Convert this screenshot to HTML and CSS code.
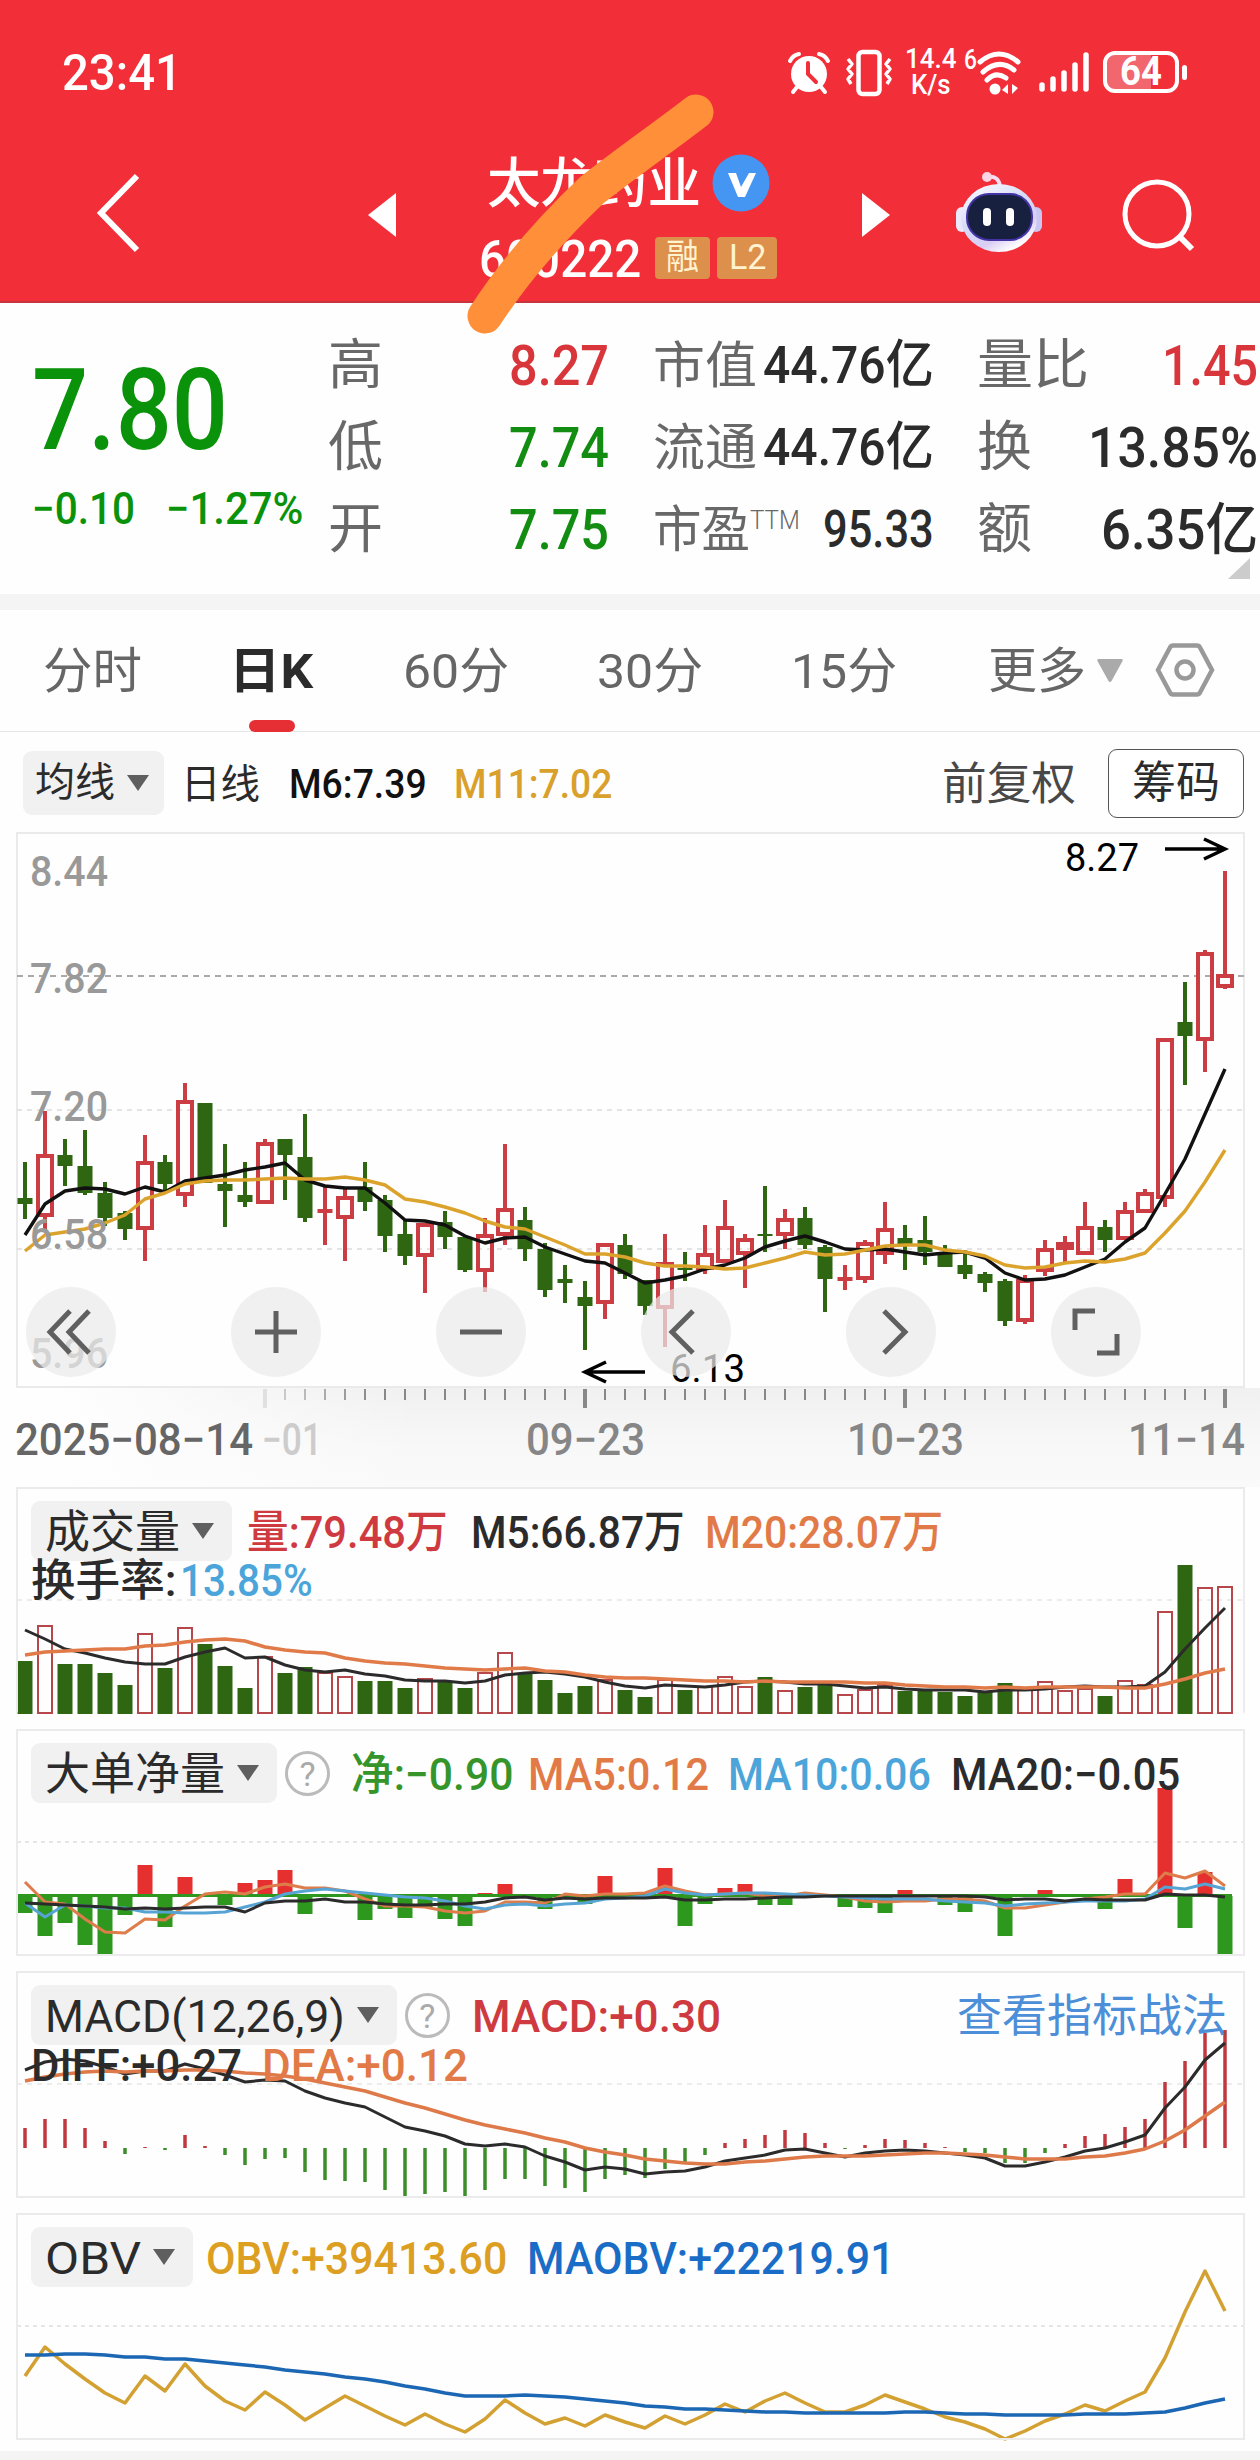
FILE: index.html
```html
<!DOCTYPE html>
<html lang="zh-CN">
<head>
  <meta charset="UTF-8">
  <title>太龙药业 600222</title>
  <link rel="stylesheet" href="styles.css">
</head>
<body>
  <header class="header">
    <div class="status">
      <span class="time fit" data-w="120">23:41</span>
      <svg class="ic-alarm" width="42" height="42" viewBox="0 0 42 42">
        <circle cx="21" cy="23" r="18" fill="#fff"/>
        <path d="M2 10 Q5 4 11 3 M40 10 Q37 4 31 3 M9 36 L5 41 M33 36 L37 41" stroke="#fff" stroke-width="4" fill="none" stroke-linecap="round"/>
        <path d="M20 12 V23 L28 31" stroke="#f22e38" stroke-width="4" fill="none" stroke-linecap="round"/>
      </svg>
      <svg class="ic-vibrate" width="48" height="42" viewBox="0 0 48 42">
        <rect x="13.500" y="1" width="21" height="42" rx="4" fill="none" stroke="#fff" stroke-width="4.500"/>
        <path d="M3 8 L7 13 L3 18 L7 23 L3 28 L6 33 M45 8 L41 13 L45 18 L41 23 L45 28 L42 33" stroke="#fff" stroke-width="3.500" fill="none" stroke-linejoin="round"/>
      </svg>
      <div class="speed"><span class="fit" data-w="52">14.4</span><span class="fit" data-w="40">K/s</span></div>
      <span class="six fit" data-w="13">6</span>
      <svg class="ic-wifi" width="44" height="46" viewBox="0 0 44 46">
        <path d="M3 12 Q22 -4 41 12 M6 22 Q22 8 37 20 M10 30 Q19 21 29 28" stroke="#fff" stroke-width="5" fill="none" stroke-linecap="round"/>
        <circle cx="18" cy="39" r="5.500" fill="#fff"/>
        <path d="M31 34 V44 L25 40 Z M35 34 V44 L41 38 Z" fill="#fff"/>
      </svg>
      <svg class="ic-signal" width="50" height="42" viewBox="0 0 50 42">
        <path d="M3 34 V38 M14 28 V38 M25 22 V38 M36 14 V38 M47 4 V38" stroke="#fff" stroke-width="5.500" stroke-linecap="round"/>
      </svg>
      <div class="battery"><span class="fit" data-w="42">64</span></div>
      <i class="battery-tip"></i>
    </div>
    <div class="nav">
      <svg class="ic-back" width="46" height="80" viewBox="0 0 46 80"><path d="M41 3 L5 40 L41 77" stroke="#fff" stroke-width="6" fill="none"/></svg>
      <svg class="ic-prev" width="28" height="44" viewBox="0 0 28 44"><path d="M28 0 V44 L0 22 Z" fill="#fff"/></svg>
      <div class="title">
        <div class="title-row">
          <span class="name fit" data-w="214">太龙药业</span>
          <svg width="58" height="58" viewBox="0 0 58 58">
            <circle cx="29" cy="29" r="28.500" fill="#4595f2"/>
            <path d="M16 19 H24 L29 33 L37 19 H44 L33 43 H26 Z" fill="#fff"/>
          </svg>
        </div>
        <div class="title-row">
          <span class="code fit" data-w="162">600222</span>
          <span class="tag tag-first"><b class="fit" data-w="33">融</b></span>
          <span class="tag"><b class="fit" data-w="38">L2</b></span>
        </div>
      </div>
      <svg class="ic-next" width="28" height="44" viewBox="0 0 28 44"><path d="M0 0 V44 L28 22 Z" fill="#fff"/></svg>
      <svg class="ic-robot" width="88" height="82" viewBox="0 0 88 82">
        <defs>
          <linearGradient id="shell" x1="0" y1="0" x2="0.600" y2="1">
            <stop offset="0" stop-color="#fff"/><stop offset=".5" stop-color="#d5dcf8"/><stop offset=".8" stop-color="#d9cdf3"/><stop offset="1" stop-color="#fff"/>
          </linearGradient>
        </defs>
        <path d="M32 6 Q44 4 45 16" stroke="#f6dcf3" stroke-width="4" fill="none"/>
        <circle cx="32" cy="6" r="5" fill="#fbd5e3"/>
        <rect x="1" y="36" width="12" height="25" rx="6" fill="#ece8fb"/>
        <rect x="75" y="36" width="12" height="25" rx="6" fill="#c9c6f4"/>
        <ellipse cx="44" cy="47" rx="38" ry="34" fill="url(#shell)"/>
        <rect x="12" y="23" width="65" height="46" rx="22" fill="#17203f" stroke="#4433a5" stroke-width="2"/>
        <rect x="28" y="37" width="8" height="18" rx="4" fill="#fff"/>
        <rect x="51" y="37" width="8" height="18" rx="4" fill="#fff"/>
      </svg>
      <svg class="ic-search" width="74" height="74" viewBox="0 0 74 74">
        <circle cx="35" cy="35" r="32" fill="none" stroke="#fff" stroke-width="5"/>
        <path d="M57 57 L70 70" stroke="#fff" stroke-width="6"/>
      </svg>
    </div>
    <svg class="brush" width="270" height="250" viewBox="460 90 270 250">
      <path d="M485 316 C515 270 550 230 592 190 C622 166 665 136 696 112" stroke="#ff8f39" stroke-width="35" fill="none" stroke-linecap="round"/>
    </svg>
  </header>

  <section class="quote">
    <div class="price">
      <div class="last fit" data-w="196">7.80</div>
      <div class="change"><span class="fit" data-w="103">−0.10</span><span class="fit" data-w="137">−1.27%</span></div>
    </div>
    <div class="col col-a">
      <div><label class="fit" data-w="55">高</label><span class="up fit" data-w="100">8.27</span></div>
      <div><label class="fit" data-w="55">低</label><span class="down fit" data-w="100">7.74</span></div>
      <div><label class="fit" data-w="55">开</label><span class="down fit" data-w="100">7.75</span></div>
    </div>
    <div class="col col-b">
      <div><label class="fit" data-w="104">市值</label><span class="fit" data-w="171">44.76亿</span></div>
      <div><label class="fit" data-w="104">流通</label><span class="fit" data-w="171">44.76亿</span></div>
      <div><label class="pe"><span class="fit" data-w="97">市盈</span><sup class="fit" data-w="50">TTM</sup></label><span class="fit" data-w="111">95.33</span></div>
    </div>
    <div class="col col-c">
      <div><label class="fit" data-w="112">量比</label><span class="up fit" data-w="96">1.45</span></div>
      <div><label class="fit" data-w="55">换</label><span class="fit" data-w="170">13.85%</span></div>
      <div><label class="fit" data-w="55">额</label><span class="fit" data-w="157">6.35亿</span></div>
    </div>
    <i class="corner"></i>
  </section>

  <nav class="tabs">
    <a><span class="fit" data-w="99">分时</span></a>
    <a class="active"><span class="fit" data-w="84">日K</span></a>
    <a><span class="fit" data-w="106">60分</span></a>
    <a><span class="fit" data-w="106">30分</span></a>
    <a><span class="fit" data-w="106">15分</span></a>
    <a><span class="fit" data-w="98">更多</span></a>
    <svg class="more" width="28" height="24" viewBox="0 0 28 24"><path d="M3 0 H25 Q28 0 26 3 L15.500 22 Q14 24 12.500 22 L2 3 Q0 0 3 0" fill="#aaa"/></svg>
    <svg class="hex" width="60" height="56" viewBox="0 0 60 56">
      <path d="M18 3.500 H42 Q44 3.500 45 5.500 L57 28 L45 50.500 Q44 52.500 42 52.500 H18 Q16 52.500 15 50.500 L3 28 L15 5.500 Q16 3.500 18 3.500 Z" fill="none" stroke="#999" stroke-width="4.500"/>
      <circle cx="30" cy="28" r="8.500" fill="none" stroke="#999" stroke-width="4.500"/>
    </svg>
  </nav>

  <div class="ma-row">
    <button class="pick"><span class="fit" data-w="80">均线</span><i></i></button>
    <span class="period fit" data-w="79">日线</span>
    <span class="m6 fit" data-w="138">M6:7.39</span>
    <span class="m11 fit" data-w="158">M11:7.02</span>
    <span class="adjust fit" data-w="134">前复权</span>
    <button class="chips"><span class="fit" data-w="88">筹码</span></button>
  </div>

  <div class="chart">
    <svg id="kline" width="1229" height="556" viewBox="16 832 1229 556"></svg>
    <div class="controls">
      <button><svg viewBox="0 0 90 90"><path d="M44 24 L24 45 L44 66 M63 24 L43 45 L63 66"/></svg></button>
      <button><svg viewBox="0 0 90 90"><path d="M24 45 H66 M45 24 V66"/></svg></button>
      <button><svg viewBox="0 0 90 90"><path d="M24 45 H66"/></svg></button>
      <button><svg viewBox="0 0 90 90"><path d="M52 24 L31 45 L52 66"/></svg></button>
      <button><svg viewBox="0 0 90 90"><path d="M38 24 L59 45 L38 66"/></svg></button>
      <button><svg viewBox="0 0 90 90"><path d="M24 43 V24 H44 M66 47 V66 H46"/></svg></button>
    </div>
  </div>
  <div class="axis"><svg id="axis" width="1260" height="99" viewBox="0 1388 1260 99"></svg></div>

  <section class="panel panel-vol">
    <svg id="vol" width="1229" height="227" viewBox="16 1487 1229 227"></svg>
    <div class="legend">
      <button class="pick"><span class="fit" data-w="135">成交量</span><i></i></button>
      <span class="red l-vol fit" data-w="201">量:79.48万</span>
      <span class="black l-m5 fit" data-w="214">M5:66.87万</span>
      <span class="orange l-m20 fit" data-w="238">M20:28.07万</span>
    </div>
    <div class="legend2"><span class="black fit" data-w="146">换手率:</span><span class="sky fit" data-w="133">13.85%</span></div>
  </section>

  <section class="panel">
    <svg id="net" width="1229" height="227" viewBox="16 1729 1229 227"></svg>
    <div class="legend">
      <button class="pick"><span class="fit" data-w="180">大单净量</span><i></i></button>
      <span class="help">?</span>
      <span class="green l-net fit" data-w="162">净:−0.90</span>
      <span class="orange l-ma5 fit" data-w="181">MA5:0.12</span>
      <span class="sky l-ma10 fit" data-w="203">MA10:0.06</span>
      <span class="black l-ma20 fit" data-w="229">MA20:−0.05</span>
    </div>
  </section>

  <section class="panel">
    <svg id="macd" width="1229" height="227" viewBox="16 1971 1229 227"></svg>
    <div class="legend">
      <button class="pick"><span class="fit" data-w="300">MACD(12,26,9)</span><i></i></button>
      <span class="help">?</span>
      <span class="red l-macd fit" data-w="249">MACD:+0.30</span>
      <a class="link fit" data-w="270">查看指标战法</a>
    </div>
    <div class="legend2 gap"><span class="black fit" data-w="211">DIFF:+0.27</span><span class="orange fit" data-w="206">DEA:+0.12</span></div>
  </section>

  <section class="panel">
    <svg id="obv" width="1229" height="227" viewBox="16 2213 1229 227"></svg>
    <div class="legend">
      <button class="pick"><span class="fit" data-w="96">OBV</span><i></i></button>
      <span class="gold l-obv fit" data-w="301">OBV:+39413.60</span>
      <span class="blue l-maobv fit" data-w="368">MAOBV:+22219.91</span>
    </div>
  </section>
  <footer class="foot"></footer>

  <script src="chart.js"></script>
</body>
</html>
```

FILE: styles.css
```css
* { box-sizing: border-box; }

body {
  margin: 0;
  width: 1260px;
  height: 2460px;
  overflow: hidden;
  background: #fefefe;
  color: #2b2b2b;
  font-family: Roboto, "Noto Sans CJK SC", sans-serif;
  display: flex;
  flex-direction: column;
}

button { border: 0; padding: 0; font: inherit; color: inherit; }
svg { display: block; flex: none; overflow: visible; }
.fit { display: inline-block; white-space: nowrap; flex: none; transform-origin: 0 50%; }

/* header */
.header {
  position: relative;
  flex: none;
  height: 303px;
  background: #f22e38;
  border-bottom: 2px solid #c6353c;
  color: #fff;
}
.status { display: flex; align-items: center; height: 144px; padding-left: 62px; }
.time { font-size: 50px; font-weight: 500; line-height: 144px; padding-top: 2px; }
.ic-alarm { margin-left: 606px; }
.ic-vibrate { margin-left: 15px; }
.speed { width: 54px; margin-left: 12px; display: flex; flex-direction: column; align-items: flex-start; font-size: 27px; line-height: 26px; font-weight: 500; }
.speed .fit + .fit { margin-left: 6px; }
.six { font-size: 28px; line-height: 26px; margin-left: 5px; padding-bottom: 0; margin-top: -25px; font-weight: 500; }
.ic-wifi { margin-left: 0; margin-top: 2px; }
.ic-signal { margin-left: 18px; }
.battery {
  width: 76px; height: 42px; margin-left: 14px;
  border: 4px solid #fff; border-radius: 12px;
  background: linear-gradient(90deg, #f2666d 64%, #f22e38 64%);
  display: flex; justify-content: center; align-items: center;
  font-size: 40px; font-weight: 700; line-height: 36px;
}
.battery-tip { width: 5px; height: 15px; margin-left: 3px; border-radius: 3px; background: #fff; }

.nav { display: flex; align-items: flex-start; padding-left: 96px; }
.ic-back { margin-top: 29px; }
.ic-prev { margin: 49px 0 0 226px; }
.title { width: 306px; margin-left: 83px; padding-top: 4px; }
.title-row { display: flex; align-items: center; height: 70px; padding-left: 8px; }
.title-row + .title-row { height: 76px; margin-top: 2px; padding: 0; }
.name { font-size: 54px; line-height: 70px; font-weight: 500; padding-top: 4px; }
.title-row svg { margin-left: 11px; }
.code { font-size: 52px; line-height: 76px; font-weight: 500; padding-top: 3px; }
.tag { width: 60px; height: 42px; margin-left: 7px; background: #dd8f4c; border-radius: 4px; display: flex; justify-content: center; align-items: center; color: #fff3d0; }
.tag b { font-size: 35px; font-weight: 400; line-height: 42px; }
.tag-first { width: 55px; margin-left: 14px; }
.ic-next { margin: 49px 0 0 77px; }
.ic-robot { margin: 27px 0 0 65px; }
.ic-search { margin: 35px 0 0 79px; }
.brush { position: absolute; left: 460px; top: 90px; z-index: 2; }

/* quote */
.quote { position: relative; display: flex; height: 291px; flex: none; padding-top: 22px; }
.price { width: 328px; padding: 30px 0 0 32px; color: #0a930a; }
.last { font-size: 113px; font-weight: 500; line-height: 112px; display: inline-block; }
.change { display: flex; gap: 31px; font-size: 44px; line-height: 60px; font-weight: 500; margin-top: 12px; }
.col > div { display: flex; justify-content: space-between; align-items: center; height: 82px; }
.col label { color: #686868; font-size: 54px; font-weight: 400; line-height: 82px; }
.col span { font-weight: 500; line-height: 82px; }
.col-a { width: 281px; font-size: 56px; }
.col-b { width: 281px; margin-left: 44px; font-size: 52px; }
.col-b label { font-size: 50px; }
.col .pe { display: flex; }
.pe .fit { font-weight: 400; }
.col .pe sup { font-size: 26px; line-height: 62px; height: 82px; font-weight: 300; vertical-align: top; }
.col-c { width: 281px; margin-left: 43px; font-size: 56px; }
.up { color: #d8363b; }
.down { color: #128d12; }
.corner { position: absolute; right: 10px; bottom: 15px; border-style: solid; border-width: 0 0 21px 22px; border-color: transparent transparent #ccc transparent; }

/* tabs */
.tabs {
  flex: none; height: 138px; border-top: 16px solid #f4f4f4; border-bottom: 1.500px solid #e6e6e6;
  display: grid; grid-template-columns: 184px 182px 180px 208px 184px 158px 60px 64px; color: #666; font-size: 49px;
}
.tabs a { display: flex; flex-direction: column; align-items: center; line-height: 124px; height: 121px; }
.tabs .active { color: #2b2b2b; font-weight: 700; padding-right: 7px; }
.tabs .active::after { content: ""; width: 46px; height: 12px; border-radius: 6px; background: #e52f35; margin: -14px 0 0 0; flex: none; }
.tabs a:nth-child(1) { padding-left: 2px; }
.tabs a:nth-child(5) { padding-right: 4px; }
.tabs a:nth-child(6) { padding-left: 40px; }
.more { margin: 49px 0 0 0; }
.hex { margin: 32px 0 0 -1px; }

/* moving averages */
.ma-row { display: flex; align-items: center; flex: none; height: 100px; padding: 2px 16px 0 23px; line-height: 66px; }
.pick { display: flex; align-items: center; background: #f1f1f1; border-radius: 9px; }
.pick i { border-style: solid; border-width: 16px 11px 0; border-color: #5f5f5f transparent transparent; margin-left: 12px; }
.ma-row .pick { width: 141px; height: 64px; padding-left: 12px; font-size: 40px; }
.ma-row > .fit { padding-top: 4px; }
.period { font-size: 40px; margin-left: 17px; }
.m6, .m11 { font-size: 40px; font-weight: 500; color: #111; margin-left: 27px; }
.m11 { color: #d9a02b; }
.m6 { margin-left: 29px; }
.adjust { font-size: 45px; color: #484848; margin-left: 330px; }
.chips { width: 136px; height: 69px; margin-left: auto; border: 1.500px solid #555; border-radius: 9px; background: #fff; font-size: 44px; line-height: 66px; }

/* candles */
.chart { position: relative; flex: none; height: 556px; margin: 0 15px 0 16px; box-shadow: inset 0 0 0 2px #eaeaea; }
.controls { position: absolute; left: 10px; bottom: 11px; display: flex; gap: 115px; }
.controls button { width: 90px; height: 90px; border-radius: 50%; background: rgba(234, 234, 234, .72); }
.controls path { fill: none; stroke: #606060; stroke-width: 5; }
.axis { flex: none; height: 99px; background: linear-gradient(90deg, #fefefe 60px, rgba(254, 254, 254, 0) 420px), linear-gradient(#f0f0f0, #f8f8f8 60%, #fafafa); }

/* indicator panels */
.panel { position: relative; flex: none; height: 227px; margin: 0 15px 15px 16px; border: 2px solid #ebebeb; padding: 12px 0 0 13px; }
.panel-vol { border-bottom-color: transparent; }
.panel > svg { position: absolute; left: -2px; top: -2px; z-index: -1; }
.legend { display: flex; align-items: center; height: 60px; font-size: 45px; line-height: 60px; position: relative; }
.legend .fit { padding-top: 4px; }
.legend .pick { height: 60px; padding: 0 18px 0 14px; }
.legend > .fit, .legend2 .fit { font-weight: 500; }
.legend > .link { font-weight: 400; }
.legend2 { display: flex; gap: 3px; font-size: 44px; line-height: 48px; margin-top: -4px; position: relative; }
.legend2.gap { gap: 20px; margin-top: -3px; }
.legend .pick .fit { padding-top: 3px; }
.help { width: 45px; height: 45px; border: 3px solid #bbb; border-radius: 50%; color: #aaa; font-size: 34px; line-height: 40px; text-align: center; margin-left: 8px; flex: none; }
.l-vol { margin-left: 15px; }
.l-m5 { margin-left: 23px; }
.l-m20 { margin-left: 21px; }
.l-net { margin-left: 21px; }
.l-ma5 { margin-left: 15px; }
.l-ma10 { margin-left: 18px; }
.l-ma20 { margin-left: 20px; }
.l-macd { margin-left: 22px; }
.link { margin-left: 236px; color: #4c8fd8; }
.l-obv { margin-left: 13px; }
.l-maobv { margin-left: 20px; }
.red { color: #cf3a40; }
.black { color: #2b2b2b; }
.orange { color: #e27a48; }
.sky { color: #4ba5da; }
.green { color: #35952a; }
.gold { color: #dc9f22; }
.blue { color: #1a6dc6; }
.foot { height: 9px; flex: none; background: #f4f4f4; margin-top: -4px; }
```

FILE: chart.js
```js
const STEP = 20;
const X0 = 25;
const RED = "#cb3d42";
const GREEN = "#2f6612";

const px = (i) => X0 + i * STEP;

// [rising, high, body top, body bottom, low]
const candles = [
  [0,1162,1198,1204,1219],[1,1111,1154,1217,1232],[0,1139,1155,1166,1186],[0,1130,1166,1193,1195],
  [0,1182,1193,1218,1226],[0,1211,1213,1229,1240],[1,1135,1161,1230,1261],[0,1155,1162,1184,1192],
  [1,1083,1100,1196,1207],[0,1103,1103,1183,1183],[0,1144,1184,1191,1227],[0,1162,1195,1202,1207],
  [1,1139,1142,1204,1204],[0,1139,1139,1155,1200],[0,1114,1157,1218,1222],[1,1185,1209,1213,1245],
  [1,1187,1196,1219,1261],[0,1162,1187,1202,1211],[0,1195,1200,1236,1252],[0,1219,1234,1256,1265],
  [1,1223,1223,1257,1293],[0,1211,1222,1237,1249],[0,1237,1237,1270,1272],[1,1218,1234,1272,1292],
  [1,1144,1208,1236,1245],[0,1207,1220,1249,1261],[0,1243,1249,1290,1297],[0,1265,1279,1283,1303],
  [0,1281,1297,1306,1350],[1,1243,1243,1304,1319],[0,1234,1245,1274,1279],[0,1280,1280,1306,1315],
  [1,1234,1262,1309,1347],[0,1252,1268,1270,1281],[1,1225,1253,1270,1274],[1,1200,1226,1263,1263],
  [1,1234,1238,1255,1288],[0,1186,1234,1236,1252],[1,1209,1218,1236,1249],[0,1207,1218,1245,1249],
  [0,1245,1247,1279,1312],[1,1265,1277,1281,1290],[1,1240,1242,1280,1283],[1,1202,1228,1255,1264],
  [0,1225,1238,1244,1270],[0,1216,1240,1252,1265],[0,1245,1252,1267,1267],[0,1254,1265,1274,1279],
  [0,1272,1274,1283,1292],[0,1279,1281,1321,1326],[1,1275,1279,1322,1324],[1,1240,1248,1272,1276],
  [1,1236,1242,1250,1264],[1,1202,1226,1255,1255],[0,1220,1227,1240,1252],[1,1202,1210,1240,1240],
  [1,1189,1192,1213,1213],[1,1038,1038,1199,1207],[0,982,1022,1036,1085],[1,950,952,1041,1072],
  [1,871,974,988,989]
];
const ma6 = [1235,1204,1191,1188,1189,1194,1187,1192,1181,1178,1175,1170,1167,1163,1180,1186,1188,1188,1203,1220,1221,1225,1236,1243,1238,1237,1247,1254,1261,1263,1273,1283,1280,1276,1269,1265,1258,1247,1241,1236,1242,1249,1250,1249,1252,1255,1253,1252,1258,1273,1280,1279,1275,1267,1259,1242,1228,1194,1159,1114,1069];
const ma11 = [1251,1235,1232,1229,1223,1215,1199,1193,1184,1181,1180,1180,1179,1178,1179,1179,1177,1180,1185,1199,1202,1207,1213,1221,1227,1229,1237,1245,1254,1254,1257,1263,1266,1266,1267,1269,1268,1263,1258,1252,1255,1254,1250,1246,1245,1245,1250,1252,1256,1265,1268,1267,1263,1261,1262,1259,1253,1233,1211,1182,1150];

const volume = [1661,1626,1664,1664,1673,1685,1634,1668,1628,1644,1666,1688,1657,1673,1667,1673,1677,1681,1681,1688,1679,1681,1688,1673,1653,1674,1680,1693,1686,1680,1690,1697,1680,1690,1687,1677,1687,1677,1691,1687,1684,1695,1690,1685,1691,1690,1692,1696,1691,1683,1689,1682,1691,1689,1696,1681,1685,1612,1565,1588,1587];
const volM5 = [1630,1639,1649,1653,1658,1662,1664,1664,1657,1652,1648,1658,1657,1665,1670,1672,1670,1674,1676,1680,1681,1681,1683,1681,1675,1673,1672,1674,1677,1682,1686,1688,1685,1686,1687,1685,1682,1681,1682,1684,1684,1686,1688,1687,1689,1690,1690,1690,1692,1690,1690,1689,1687,1686,1687,1687,1686,1672,1649,1628,1608];
const volM20 = [1655,1652,1651,1650,1649,1649,1646,1645,1642,1640,1639,1641,1647,1650,1652,1653,1658,1661,1663,1664,1666,1668,1669,1670,1669,1668,1671,1672,1675,1677,1678,1678,1679,1680,1681,1681,1682,1681,1682,1682,1682,1682,1683,1683,1685,1686,1687,1687,1688,1687,1688,1687,1687,1687,1687,1688,1688,1684,1679,1673,1669];

const net = [1913,1936,1923,1945,1955,1915,1865,1927,1877,0,1905,1883,1880,1870,1914,0,0,1920,1909,1918,1908,1919,1926,1893,1884,0,1909,0,1904,1876,0,0,1868,1926,1904,1888,1884,1905,1905,0,0,1907,1908,1913,1890,0,1905,1912,0,1936,0,1890,0,0,1909,1879,0,1788,1928,1872,1955];
const netMa5 = [1882,1902,1904,1919,1932,1933,1919,1920,1906,1894,1892,1894,1887,1884,1888,1888,1891,1899,1906,1906,1907,1911,1913,1911,1902,1902,1903,1894,1896,1894,1894,1893,1886,1891,1895,1894,1893,1896,1896,1893,1895,1897,1901,1902,1901,1901,1899,1899,1901,1908,1908,1905,1902,1899,1897,1894,1894,1873,1878,1871,1886];
const netMa10 = [1903,1917,1905,1906,1908,1908,1912,1912,1913,1913,1912,1907,1902,1894,1891,1889,1891,1893,1895,1897,1898,1901,1906,1909,1905,1904,1906,1904,1903,1899,1898,1896,1889,1893,1895,1894,1893,1893,1894,1895,1896,1897,1898,1899,1899,1899,1901,1902,1903,1906,1904,1903,1902,1901,1901,1901,1899,1887,1889,1884,1889];
const netMa20 = [1903,1904,1905,1906,1907,1909,1908,1909,1908,1907,1907,1912,1903,1901,1901,1899,1902,1902,1904,1905,1905,1904,1904,1902,1898,1897,1900,1898,1899,1898,1898,1898,1897,1900,1900,1899,1899,1898,1897,1897,1896,1896,1896,1896,1896,1896,1896,1896,1897,1900,1899,1899,1901,1899,1900,1900,1900,1894,1895,1895,1897];

const macd = [2128,2119,2119,2128,2141,2154,2147,2150,2135,2146,2155,2165,2159,2158,2172,2180,2181,2182,2190,2197,2194,2192,2197,2190,2179,2179,2186,2188,2192,2179,2175,2178,2169,2162,2155,2143,2139,2135,2130,2133,2143,2149,2145,2139,2140,2143,2147,2152,2153,2163,2163,2153,2144,2136,2134,2127,2119,2082,2061,2033,2030];
const diff = [2070,2062,2059,2061,2067,2074,2071,2071,2064,2069,2075,2082,2080,2081,2091,2098,2103,2107,2117,2127,2131,2136,2144,2146,2144,2147,2156,2162,2170,2167,2169,2174,2172,2171,2167,2161,2158,2155,2150,2149,2153,2157,2153,2151,2150,2151,2153,2155,2158,2166,2166,2162,2157,2151,2148,2142,2135,2108,2087,2060,2043];
const dea = [2081,2077,2074,2072,2071,2072,2071,2071,2070,2070,2071,2073,2074,2076,2079,2083,2087,2091,2097,2103,2108,2114,2120,2125,2129,2133,2138,2142,2148,2152,2155,2159,2161,2163,2164,2164,2162,2161,2159,2157,2156,2156,2156,2155,2154,2153,2153,2154,2155,2157,2159,2159,2159,2157,2156,2153,2149,2141,2130,2116,2102];

const obv = [2376,2347,2364,2379,2393,2403,2376,2391,2364,2386,2401,2410,2392,2405,2420,2408,2396,2406,2416,2425,2414,2424,2432,2419,2400,2413,2424,2418,2426,2415,2422,2428,2416,2424,2415,2404,2412,2401,2393,2403,2412,2412,2405,2395,2402,2409,2417,2422,2429,2439,2431,2421,2414,2405,2411,2401,2392,2358,2312,2271,2311];
const maobv = [2355,2355,2354,2354,2355,2357,2357,2359,2359,2361,2363,2365,2367,2370,2372,2374,2377,2379,2382,2386,2389,2393,2396,2396,2396,2395,2396,2397,2399,2401,2403,2406,2407,2409,2409,2410,2411,2412,2412,2413,2413,2413,2413,2413,2412,2412,2413,2414,2414,2415,2415,2415,2415,2414,2414,2414,2413,2412,2408,2403,2399];

const line = (ys, color, w = 3) =>
  `<polyline points="${ys.map((y, i) => px(i) + "," + y).join(" ")}" fill="none" stroke="${color}" stroke-width="${w}" stroke-linejoin="round"/>`;
const grid = (y, color = "#dcdcdc", dash = "5 5", w = 1.5) =>
  `<path d="M17 ${y} H1244" stroke="${color}" stroke-width="${w}" stroke-dasharray="${dash}"/>`;
const label = (text, x, base, w, size, color, weight = 500) =>
  `<text x="${x}" y="${base}" font-size="${size}" fill="${color}" font-weight="${weight}" textLength="${w}" lengthAdjust="spacingAndGlyphs">${text}</text>`;

function candle([rising, hi, top, bot, lo], i) {
  const x = px(i);
  if (!rising) {
    return `<path d="M${x} ${hi} V${lo}" stroke="${GREEN}" stroke-width="4"/><rect x="${x - 7.5}" y="${top}" width="15" height="${bot - top}" fill="${GREEN}"/>`;
  }
  if (bot - top < 6) {
    return `<path d="M${x} ${hi} V${lo} M${x - 7.5} ${(top + bot) / 2} H${x + 7.5}" stroke="${RED}" stroke-width="4"/>`;
  }
  return `<path d="M${x} ${hi} V${top} M${x} ${bot} V${lo}" stroke="${RED}" stroke-width="4"/><rect x="${x - 7}" y="${top + 2}" width="14" height="${bot - top - 4}" fill="none" stroke="${RED}" stroke-width="4"/>`;
}

document.getElementById("kline").innerHTML =
  grid(1110) + grid(1249) + grid(976, "#aaa", "6 5", 2) +
  candles.map(candle).join("") +
  line(ma6, "#111", 3.4) + line(ma11, "#dca32c", 3.4) +
  [["8.44", 886], ["7.82", 993], ["7.20", 1121], ["6.58", 1249], ["5.96", 1368]]
    .map(([t, y]) => label(t, 30, y, 78, 43, "#999")).join("") +
  label("8.27", 1065, 871, 74, 39, "#000", 400) +
  label("6.13", 670, 1382, 75, 39, "#000", 400) +
  `<path d="M1165 849 H1224 M1204 839 L1225 849 L1204 859 M645 1372 H586 M606 1362 L585 1372 L606 1382" fill="none" stroke="#000" stroke-width="3.5"/>`;

let ticks = "";
for (let x = 265; x <= 1225; x += 20) {
  const major = x === 265 || x === 585 || x === 905 || x === 1225;
  const alpha = x === 265 ? 0.2 : Math.min(1, 0.4 + (x - 285) / 150);
  ticks += `<path d="M${x} 1389 V${major ? 1408 : 1400}" stroke="#888" stroke-width="${major ? 4 : 2}" opacity="${alpha}"/>`;
}
document.getElementById("axis").innerHTML = ticks +
  label("2025−08−14", 15, 1455, 238, 44, "#666") +
  label("−01", 262, 1455, 60, 44, "#ccc") +
  label("09−23", 526, 1455, 119, 44, "#868686") +
  label("10−23", 847, 1455, 117, 44, "#868686") +
  label("11−14", 1128, 1455, 117, 44, "#868686");

document.getElementById("vol").innerHTML = grid(1600, "#e6e6e6") +
  volume.map((y, i) => candles[i][0]
    ? `<rect x="${px(i) - 7}" y="${y}" width="14" height="${1713 - y}" fill="none" stroke="#b6474b" stroke-width="2"/>`
    : `<rect x="${px(i) - 7.5}" y="${y}" width="15" height="${1714 - y}" fill="${GREEN}"/>`).join("") +
  line(volM5, "#2b2b2b") + line(volM20, "#e07a48", 3.5);

document.getElementById("net").innerHTML = grid(1842, "#dedede", "4 4") +
  net.map((y, i) => {
    if (!y) return "";
    return y < 1896
      ? `<rect x="${px(i) - 7.5}" y="${y}" width="15" height="${1895 - y}" fill="#e5302f"/>`
      : `<rect x="${px(i) - 7.5}" y="1896" width="15" height="${y - 1896}" fill="#2d981d"/>`;
  }).join("") +
  `<path d="M16 1895.500 H1232" stroke="#2d981d" stroke-width="3"/>` +
  line(netMa5, "#de7c4b") + line(netMa10, "#56a3d4") + line(netMa20, "#2b2b2b");

document.getElementById("macd").innerHTML = grid(2084, "#e6e6e6") +
  macd.map((y, i) => `<path d="M${px(i)} 2148 V${y}" stroke="${y < 2148 ? "#c0393f" : "#3c8e2b"}" stroke-width="3.5"/>`).join("") +
  line(diff, "#2b2b2b") + line(dea, "#de7949", 3.5);

document.getElementById("obv").innerHTML = grid(2326, "#dedede", "4 4") +
  line(obv, "#d3a032", 3.5) + line(maobv, "#1c67b4", 3.5);

// squeeze labels into their column, like a condensed numeral face
document.querySelectorAll(".fit").forEach((el) => {
  const want = Number(el.dataset.w);
  const natural = el.offsetWidth;
  el.style.transform = `scaleX(${want / natural})`;
  el.style.marginRight = want - natural + "px";
});
```
